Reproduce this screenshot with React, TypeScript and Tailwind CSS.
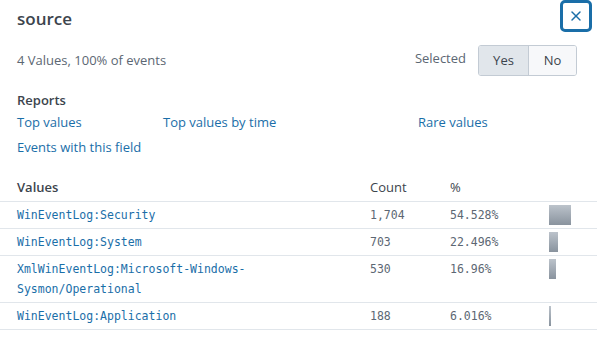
import { X } from "lucide-react";

const rows = [
    { value: ["WinEventLog:Security"], count: "1,704", pct: "54.528%", bar: 22, h: "h-[27px]" },
    { value: ["WinEventLog:System"], count: "703", pct: "22.496%", bar: 9, h: "h-[27px]" },
    { value: ["XmlWinEventLog:Microsoft-Windows-", "Sysmon/Operational"], count: "530", pct: "16.96%", bar: 7, h: "h-[47px]" },
    { value: ["WinEventLog:Application"], count: "188", pct: "6.016%", bar: 2, h: "h-[27px]" },
];

const App = () => {
    return (
        <div className="w-[597px] h-[342px] bg-white overflow-hidden font-['Open_Sans',sans-serif] text-[#3c444d]">
            <div className="flex items-start justify-between h-[40px] pl-[17px] pr-[5px]">
                <h1 className="mt-[6px] text-[17px] font-semibold text-[#3c444d]">source</h1>
                <button className="w-[32px] h-[32px] mt-0 flex items-center justify-center border-[3px] border-[#1a6ea8] rounded-[5px] text-[#1a6ea8]">
                    <X size={16} strokeWidth={2.2} />
                </button>
            </div>

            <div className="flex items-center justify-between h-[31px] mt-[5px] pl-[17px] pr-[20px]">
                <span className="text-[13px] text-[#5c6773] leading-none">4 Values, 100% of events</span>
                <div className="flex items-center">
                    <span className="text-[13px] text-[#5c6773] mr-[12px] -mt-[4px]">Selected</span>
                    <div className="flex h-[31px] border border-[#c3cbd4] rounded-[3px] overflow-hidden text-[13px] text-[#3c444d]">
                        <button className="w-[50px] bg-[#e1e6eb] border-r border-[#c3cbd4]">Yes</button>
                        <button className="w-[47px] bg-[#f7f8fa]">No</button>
                    </div>
                </div>
            </div>

            <div className="pl-[17px] mt-[14px]">
                <div className="text-[13px] font-semibold text-[#3c444d] h-[20px] leading-[20px]">Reports</div>
                <div className="flex h-[24px] items-center text-[13px] text-[#1a6ea8] pt-[1px]">
                    <a className="w-[146px]">Top values</a>
                    <a className="w-[255px]">Top values by time</a>
                    <a>Rare values</a>
                </div>
                <div className="h-[28px] flex items-center text-[13px] text-[#1a6ea8]">
                    <a>Events with this field</a>
                </div>
            </div>

            <table className="w-full table-fixed mt-[12px] border-collapse">
                <colgroup>
                    <col className="w-[370px]" />
                    <col className="w-[80px]" />
                    <col className="w-[99px]" />
                    <col />
                </colgroup>
                <thead>
                    <tr className="h-[27px] text-[13px] text-[#3c444d] border-b border-[#e1e6eb]">
                        <th className="text-left font-semibold pl-[17px]">Values</th>
                        <th className="text-left font-normal">Count</th>
                        <th className="text-left font-normal">%</th>
                        <th></th>
                    </tr>
                </thead>
                <tbody className="font-['DejaVu_Sans_Mono',monospace] text-[11.5px]">
                    {rows.map((r) => (
                        <tr key={r.count} className={`${r.h} border-b border-[#e1e6eb] align-top`}>
                            <td className="pl-[17px] pt-[3px] text-[#1a6ea8] leading-[20px]">
                                {r.value.map((v) => (
                                    <div key={v}>{v}</div>
                                ))}
                            </td>
                            <td className="pt-[3px] text-[#5c6773] leading-[20px]">{r.count}</td>
                            <td className="pt-[3px] text-[#5c6773] leading-[20px]">{r.pct}</td>
                            <td className="pt-[3px]">
                                <div
                                    className="h-[20px] bg-gradient-to-b from-[#bcc3cb] to-[#89939e]"
                                    style={{ width: r.bar }}
                                />
                            </td>
                        </tr>
                    ))}
                </tbody>
            </table>
        </div>
    );
};

export default App;
